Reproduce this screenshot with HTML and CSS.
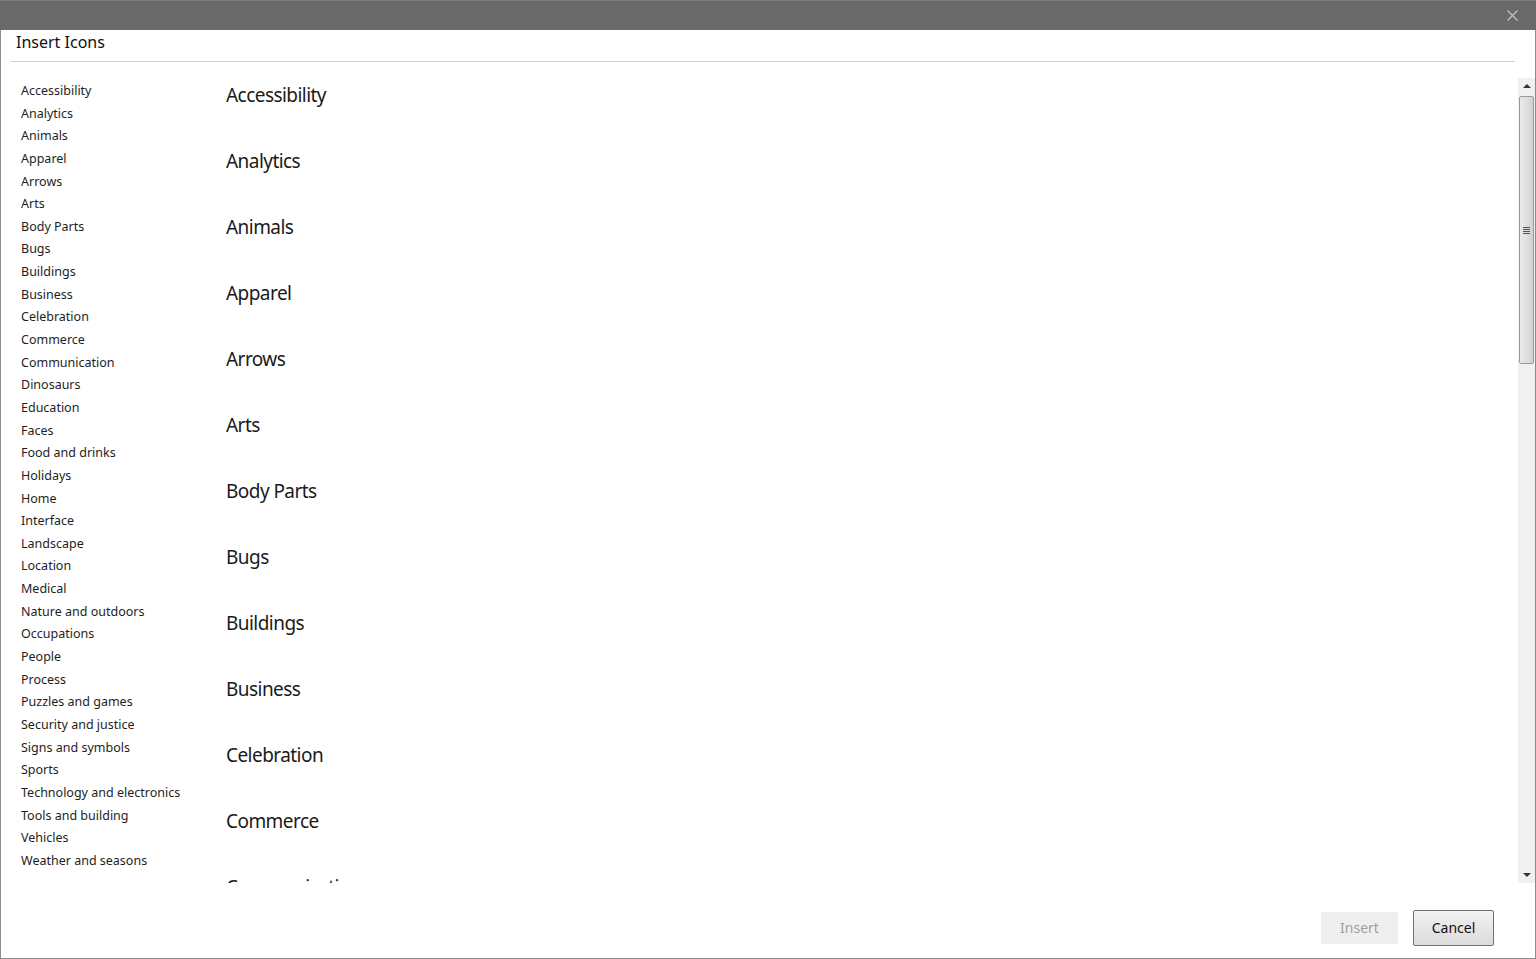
FILE: index.html
```html
<!DOCTYPE html>
<html lang="en">
<head>
    <meta charset="UTF-8">
    <title>Insert Icons</title>
    <link rel="stylesheet" href="styles.css">
</head>
<body>
    <div class="dialog">
        <div class="titlebar">
            <svg class="close" width="11" height="11" viewBox="0 0 11 11">
                <path d="M0.5 0.5 L10.5 10.5 M10.5 0.5 L0.5 10.5" stroke="#c4c4c4" stroke-width="1.2" fill="none"/>
            </svg>
        </div>
        <div class="header">Insert Icons</div>

        <div class="main">
            <ul class="sidebar">
                <li>Accessibility</li>
                <li>Analytics</li>
                <li>Animals</li>
                <li>Apparel</li>
                <li>Arrows</li>
                <li>Arts</li>
                <li>Body Parts</li>
                <li>Bugs</li>
                <li>Buildings</li>
                <li>Business</li>
                <li>Celebration</li>
                <li>Commerce</li>
                <li>Communication</li>
                <li>Dinosaurs</li>
                <li>Education</li>
                <li>Faces</li>
                <li>Food and drinks</li>
                <li>Holidays</li>
                <li>Home</li>
                <li>Interface</li>
                <li>Landscape</li>
                <li>Location</li>
                <li>Medical</li>
                <li>Nature and outdoors</li>
                <li>Occupations</li>
                <li>People</li>
                <li>Process</li>
                <li>Puzzles and games</li>
                <li>Security and justice</li>
                <li>Signs and symbols</li>
                <li>Sports</li>
                <li>Technology and electronics</li>
                <li>Tools and building</li>
                <li>Vehicles</li>
                <li>Weather and seasons</li>
            </ul>

            <div class="content">
                <div class="group"><h2>Accessibility</h2></div>
                <div class="group"><h2>Analytics</h2></div>
                <div class="group"><h2>Animals</h2></div>
                <div class="group"><h2>Apparel</h2></div>
                <div class="group"><h2>Arrows</h2></div>
                <div class="group"><h2>Arts</h2></div>
                <div class="group"><h2>Body Parts</h2></div>
                <div class="group"><h2>Bugs</h2></div>
                <div class="group"><h2>Buildings</h2></div>
                <div class="group"><h2>Business</h2></div>
                <div class="group"><h2>Celebration</h2></div>
                <div class="group"><h2>Commerce</h2></div>
                <div class="group"><h2>Communication</h2></div>
            </div>

            <div class="scrollbar">
                <div class="arrow up"></div>
                <div class="track">
                    <div class="thumb"><span class="grip"></span></div>
                </div>
                <div class="arrow down"></div>
            </div>
        </div>

        <div class="footer">
            <button class="btn insert" disabled>Insert</button>
            <button class="btn cancel">Cancel</button>
        </div>
    </div>
</body>
</html>
```

FILE: styles.css
```css
body {
    margin: 0;
    overflow: hidden;
    font-family: "Noto Sans", "Open Sans", sans-serif;
    color: #1e1e1e;
    background-color: #fff;
}
.dialog {
    width: 1536px;
    height: 959px;
    box-sizing: border-box;
    border: 1px solid #8c8c8c;
    border-top: none;
    display: flex;
    flex-direction: column;
}
.titlebar {
    height: 30px;
    margin: 0 -1px;
    background-color: #696969;
    border-top: 1px solid #7a7a7a;
    box-sizing: border-box;
    display: flex;
    justify-content: flex-end;
    align-items: center;
}
.close {
    margin-right: 18px;
}
.header {
    height: 31px;
    margin: 0 20px 0 10px;
    padding-left: 5px;
    border-bottom: 1px solid #cfcfcf;
    font-size: 16px;
    line-height: 24px;
    color: #111;
}
.main {
    display: flex;
    height: 805px;
    margin-top: 16px;
}
.sidebar {
    list-style: none;
    margin: 0;
    padding: 2px 0 0 20px;
    width: 205px;
    flex-shrink: 0;
    font-size: 12.5px;
}
.sidebar li {
    height: 22.65px;
    line-height: 22.65px;
    white-space: nowrap;
}
.content {
    flex: 1;
    overflow: hidden;
    padding-top: 3px;
}
.group {
    height: 66px;
}
.group h2 {
    margin: 0;
    font-weight: normal;
    font-size: 19px;
    letter-spacing: -0.55px;
    line-height: 28px;
    color: #1a1a1a;
    white-space: nowrap;
}
.scrollbar {
    width: 17px;
    display: flex;
    flex-direction: column;
    background-color: #f0f0f0;
}
.arrow {
    height: 18px;
    position: relative;
}
.arrow::after {
    content: "";
    position: absolute;
    left: 5px;
    border-left: 4px solid transparent;
    border-right: 4px solid transparent;
}
.arrow.up::after {
    top: 6px;
    border-bottom: 4px solid #333;
}
.arrow.down::after {
    top: 8px;
    border-top: 4px solid #333;
}
.track {
    flex: 1;
}
.thumb {
    height: 268px;
    margin: 0 1px;
    box-sizing: border-box;
    border: 1px solid #9a9a9a;
    border-radius: 2px;
    background: linear-gradient(to right, #eaeaea, #dcdcdc 60%, #d0d0d0);
    display: flex;
    justify-content: center;
    align-items: center;
}
.grip {
    width: 7px;
    height: 7px;
    background: repeating-linear-gradient(to bottom, #555 0, #555 1px, transparent 1px, transparent 2px);
}
.footer {
    flex: 1;
    display: flex;
    justify-content: flex-end;
    align-items: center;
    padding: 14px 41px 0 0;
    gap: 15px;
}
.btn {
    font-family: "Noto Sans", "Open Sans", sans-serif;
    font-size: 14px;
    height: 32px;
    border-radius: 2px;
}
.btn.insert {
    width: 77px;
    border: none;
    background-color: #efefef;
    color: #a0a0a0;
}
.btn.cancel {
    width: 81px;
    height: 36px;
    border: 1px solid #707070;
    background: linear-gradient(to bottom, #f3f3f3, #e6e6e6 50%, #dcdcdc);
    color: #111;
}
```
